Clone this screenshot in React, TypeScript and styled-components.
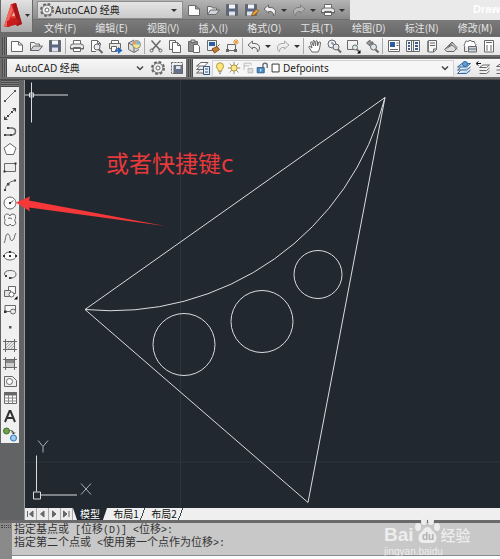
import React from "react";
import styled, { createGlobalStyle, css } from "styled-components";

const GlobalStyle = createGlobalStyle`
  *, *::before, *::after { box-sizing: border-box; }
  body { margin: 0; background: #626364; }
  body, button, select, input {
    font-family: "Noto Sans", "Noto Sans CJK SC", sans-serif;
    font-size: 10px;
  }
`;

/* ---------- icons, drawn on a 16 x 16 grid ---------- */

const icons: Record<string, React.ReactNode> = {
  new: <path d="M2.500 3.500h7l4 3.500v6.500h-11zM9.500 3.500V7h4" fill="#fdfdfd" />,
  open: (
    <>
      <path d="M2.500 12.500v-8h4l1 1.500h4v2" fill="#eee" />
      <path d="M2.500 12.500l3-4.500h9l-3.500 4.500z" fill="#cfd3da" />
    </>
  ),
  save: (
    <>
      <path d="M2.500 2.500h11v11h-11z" fill="#5b6780" />
      <path d="M5 2.500h6v4H5z" fill="#f4f6fa" stroke="none" />
      <path d="M5 9.500h6v4H5z" fill="#dfe4ec" stroke="none" />
    </>
  ),
  saveas: (
    <>
      <path d="M2.500 2.500h11v11h-11z" fill="#5b6780" />
      <path d="M5 2.500h6v4H5z" fill="#f4f6fa" stroke="none" />
      <path d="M4 9.500h6v4H4z" fill="#dfe4ec" stroke="none" />
      <path d="M8.500 14l1-3 4-4 2 2-4 4z" fill="#f0a23c" stroke="#8a5a20" />
    </>
  ),
  plot: (
    <>
      <path d="M4.500 6V2.500h7V6" fill="#fff" />
      <path d="M4 6h8q2.500 0 2.500 2.500V11h-13V8.500Q1.500 6 4 6z" fill="#e8e8e8" />
      <path d="M4.500 9.500h7v4h-7z" fill="#fff" />
      <path d="M2 10.500h12" />
    </>
  ),
  preview: (
    <>
      <path d="M8 13.500H3.500v-11h6l3 3v2M9.500 2.500v3h3" fill="#fff" />
      <circle cx="9" cy="9" r="3" fill="#e6edf4" />
      <path d="M11 11.500l3.500 3.500" strokeWidth="2" />
    </>
  ),
  publish: (
    <>
      <path d="M4.500 5V2.500h7V5" fill="#fff" />
      <path d="M2.500 5.500h11v5h-11z" fill="#e8e8e8" />
      <path d="M4.500 8.500h5v5h-5z" fill="#fff" />
      <path d="M8 11.500h3V9l4.500 3.500L11 16v-2.500H8z" fill="#2767b8" stroke="none" />
    </>
  ),
  print3d: (
    <>
      <path d="M8 2L2.500 5v6.500L8 14.500l5-3" fill="#ddd" />
      <path d="M2.500 5L8 8v6" />
      <circle cx="10.500" cy="6.500" r="4" fill="#f1ea8a" stroke="#888" />
      <path d="M10.500 6.500V3a3.500 3.500 0 0 1 3.500 3.500z" fill="#6fb5e8" stroke="none" />
      <path d="M10.500 6.500H7A3.500 3.500 0 0 1 10.500 3z" fill="#e69a6c" stroke="none" />
    </>
  ),
  cut: (
    <>
      <path d="M3.500 2.500L12 12M12.500 2.500L4 12" strokeWidth="1.500" />
      <circle cx="3.500" cy="12.500" r="1.500" />
      <circle cx="12.500" cy="12.500" r="1.500" />
    </>
  ),
  copy: (
    <>
      <path d="M2.500 11.500v-9h6v2M2.500 11.500h3" fill="#fff" />
      <path d="M5.500 4.500h5l3 3v7h-8zM10.500 4.500v3h3" fill="#fff" />
    </>
  ),
  paste: (
    <>
      <path d="M2.500 3.500h9v10h-9z" fill="#8c8c8c" />
      <path d="M5 2h4v2.500H5z" fill="#ccc" />
      <path d="M7.500 6.500h4l2 2v6h-6z" fill="#fff" />
    </>
  ),
  match: (
    <>
      <path d="M2.500 2.500h9v10h-9z" fill="#eef2f8" />
      <path d="M4 4h6v4H4z" fill="#2c5d9c" stroke="none" />
      <path d="M12.500 8.500l2-2M7 11l5-2.500 2.500 3-5 3.500z" fill="#c47a35" stroke="#85501c" />
    </>
  ),
  block: (
    <>
      <path d="M3.500 6.500h8v6h-8z" fill="#f2f2f2" />
      <path d="M2 11h3v3H2zM10 11h3v3h-3z" fill="#666" stroke="none" />
      <path d="M12 1v6M9 4h6M10 2l4 4M14 2l-4 4" stroke="#e8963a" />
    </>
  ),
  undo: <path d="M2 7l4.500-4v2.500H9q4.500.5 4.500 4.500 0 2.500-2 4 .5-3.500-2.500-4.500H6.500V11z" fill="#eee" />,
  redo: <path d="M14 7L9.500 3v2.500H7Q2.500 6 2.500 10q0 2.500 2 4-.5-3.500 2.500-4.500h2.500V11z" fill="#eee" stroke="#aaa" />,
  quickredo: <path d="M14 7L9.500 3v2.500H7Q2.500 6 2.500 10q0 2.500 2 4-.5-3.500 2.500-4.500h2.500V11z" fill="#b5b5b5" stroke="#808080" />,
  caret: <path d="M5 7h6l-3 3z" fill="#333" stroke="none" />,
  chevron: <path d="M5 6.500l3 3 3-3" strokeWidth="1.500" stroke="#444" />,
  pan: (
    <path
      d="M5 14L2 9.500q-.5-1.500 1-1L5 10 3.500 4.500q.5-1.500 1.500 0L6.500 8 6 3q1-1.500 1.500 0L8.500 8 9 3q1-1 1.500.5L10.500 8l1.500-4q1.500-.5 1.500 1L12.500 11 11 14z"
      fill="#fff"
    />
  ),
  zoomrt: (
    <>
      <circle cx="6" cy="6" r="4" fill="#eef" />
      <path d="M6 4v2h2" />
      <circle cx="10" cy="9" r="3" fill="#dde8ee" />
      <path d="M12 11.500l3 3" strokeWidth="2" />
    </>
  ),
  zoomwin: (
    <>
      <path d="M9 11.500H2.500v-9h10V7" />
      <circle cx="10" cy="9.500" r="2.500" fill="#dde8ee" />
      <path d="M12 11.500l2 2" strokeWidth="2" />
      <path d="M15.500 12v3.500H12z" fill="#000" stroke="none" />
    </>
  ),
  zoomprev: (
    <>
      <path d="M6 2L2.500 5 6 8V6h3V4H6z" fill="#999" />
      <circle cx="9.500" cy="9" r="3" fill="#dde8ee" />
      <path d="M11.500 11.500l3 3" strokeWidth="2" />
    </>
  ),
  props: (
    <>
      <path d="M2.500 2.500h11v11h-11z" fill="#fff" />
      <path d="M4 4h5v5H4z" fill="#2c5d9c" stroke="none" />
      <path d="M10.500 5h2M10.500 7.500h2M4 11.500h8" />
    </>
  ),
  center: (
    <>
      <path d="M1.500 2.500h13v11h-13z" fill="#f5f7fb" />
      <path d="M3 4h2v2H3zM3 7h2v2H3zM3 10h2v2H3zM10 4h3v2h-3zM10 7h3v2h-3zM10 10h3v2h-3z" fill="#3d5f92" stroke="none" />
      <path d="M6.500 3v10M8.500 3v10" />
    </>
  ),
  palettes: (
    <>
      <path d="M4.500 2.500h8v9l-3 2.500h-5z" fill="#f5f5f5" />
      <path d="M6 5h5M6 7.500h5M9.500 14v-3h3" />
      <path d="M3 3h1.500v11H3z" fill="#888" stroke="none" />
    </>
  ),
  sheet: (
    <>
      <path d="M1.500 11.500L9 4l5 5.500-3 4H4z" fill="#ddd" />
      <path d="M3.500 10.500L9 7l5.500 4.500M5 8.500l4.500-3" />
    </>
  ),
  markup: (
    <>
      <path d="M3 9q-2-2 0-3.500Q3 2 6 3.500q2-2.500 4 0 3-1 3 2 2 1 0 3" fill="#fff" />
      <path d="M6.500 8.500h8v5.500h-8z" fill="#c8d2e0" />
      <path d="M2.500 9v4.500h3M7 11h7" />
    </>
  ),
  calc: (
    <>
      <path d="M3.500 2.500h9v11.500h-9z" fill="#fff" />
      <path d="M5 4.500h6M5 8h2M9 8h2M5 10h2M9 10h2M5 12h2M9 12h2" />
    </>
  ),
  gear: (
    <>
      <circle cx="8" cy="8" r="6" strokeWidth="2" strokeDasharray="2.700 2" />
      <circle cx="8" cy="8" r="5" fill="#eee" />
      <circle cx="8" cy="8" r="2" fill="#fff" />
    </>
  ),
  wsave: (
    <>
      <path d="M2.500 2.500h11v11h-11z" fill="#eceff5" strokeDasharray="2 1" />
      <path d="M5 5.500h8.500v8H5z" fill="#65728c" />
      <path d="M7 6h4.500v3H7z" fill="#dfe5ee" stroke="none" />
    </>
  ),
  layers: (
    <>
      <path d="M1.500 6L6 2.500h7L9.500 6zM1.500 9.500l3-2.500M1.500 13l3-2.500M1.500 9.500H8M1.500 13H8" fill="#fff" />
      <path d="M8.500 6.500h6v8h-6z" fill="#e6edf7" stroke="#38557f" />
      <path d="M10 9h3M10 12h3" stroke="#38557f" />
    </>
  ),
  bulb: (
    <>
      <path d="M8 2a4 4 0 0 1 4 4q0 2-2 4v1.500H6V10Q4 8 4 6a4 4 0 0 1 4-4z" fill="#ffe77a" stroke="#a98d34" />
      <path d="M6.500 12.500h3M7 14.500h2" />
    </>
  ),
  sun: (
    <>
      <path d="M8 1v14M1 8h14M3 3l10 10M13 3L3 13" stroke="#8a826a" />
      <circle cx="8" cy="8" r="3.500" fill="#ffe884" stroke="#a98d34" />
    </>
  ),
  vpfreeze: (
    <g stroke="#b5b5b5">
      <path d="M3.500 10V2.500h8V5M3.500 5.500h6" />
      <path d="M8 8.500h5.500v5H8z" fill="#ddd" />
    </g>
  ),
  unlock: (
    <>
      <path d="M2.500 7.500h8v6h-8z" fill="#4a90cc" stroke="#28567f" />
      <path d="M9 7.500V5q0-2.500 2.500-2.500T14 5v3" strokeWidth="1.500" />
      <path d="M6.500 9v3" stroke="#fff" />
    </>
  ),
  swatch: <path d="M3.500 3.500h8v9h-8z" fill="#fff" stroke="#222" />,
  layercur: (
    <>
      <path d="M1.500 7L6 3.500h8.500L10.500 7zM1.500 10l3-2.500M1.500 13.500l3-3M1.500 10h9l4-3M1.500 13.500h9l4-3.500" fill="#b9d8f2" stroke="#35679c" />
      <circle cx="9" cy="4" r="2.500" fill="#5ba3df" stroke="#35679c" />
    </>
  ),
  layerprev: (
    <>
      <path d="M4.500 7.500L8 5h6.500L11.500 7.500zM4.500 10.500h7l3-2.500M4.500 13.500h7l3-2.500" fill="#fff" />
      <path d="M6 3.500H2M3.500 1.500l-2.500 2 2.500 2" stroke="#111" />
    </>
  ),
  layerstate: <path d="M2.500 6.500L7 3.500h7L10 6.500zM2.500 10h8l4-3M2.500 13.500h8l4-3.500" fill="#fff" />,
  line: (
    <>
      <path d="M3 13L13 3" />
      <path d="M2 12h2v2H2zM12 2h2v2h-2z" fill="#555" stroke="none" />
    </>
  ),
  xline: (
    <>
      <path d="M2.500 13.500l11-11" />
      <path d="M2 14v-4l4 4zM14 2v4l-4-4zM5 9h2v2H5zM9 5h2v2H9z" fill="#444" stroke="none" />
    </>
  ),
  pline: (
    <>
      <path d="M3 12h7q3.500-.5 3.500-3.500T10 5H6" strokeWidth="1.500" />
      <path d="M2 11h2v2H2zM8 11h2v2H8zM5 4h2v2H5z" fill="#444" stroke="none" />
    </>
  ),
  polygon: <path d="M8 2.500l6 4.500-2.500 6.500h-7L2 7z" fill="#fff" />,
  rect: (
    <>
      <path d="M2.500 4.500h11v8h-11z" fill="#ececec" />
      <path d="M1.500 11.500h2v2h-2zM12.500 3.500h2v2h-2z" fill="#333" stroke="none" />
    </>
  ),
  arc: (
    <>
      <path d="M3 13Q4 5 13 3.500" />
      <path d="M2 12h2v2H2zM5 6h2.500v2.500H5zM12 2.500h2v2h-2z" fill="#444" stroke="none" />
    </>
  ),
  circle: (
    <>
      <circle cx="8" cy="8" r="6" fill="#fafafa" />
      <path d="M8 8l3.500-2.500" />
      <path d="M7 7h2v2H7z" fill="#333" stroke="none" />
    </>
  ),
  cloud: (
    <path
      d="M8 4Q7 1.500 4.500 2 1.500 3 2.500 6.500 4 8 2.500 9.500 2 13 5 13.500q2.500.5 3-1.500 1 2.500 4 1.500 3-2 1-4.500-1-1 .5-2.500Q14 2 11 2 8.500 2 8 4zM6 6.500q2-1.500 4 .5"
      fill="#f6f6f6"
    />
  ),
  spline: <path d="M2 13C4 11 3 3 6 4S7 11 10 10.500 12 5 14 3" />,
  ellipse: (
    <>
      <ellipse cx="8" cy="8" rx="6" ry="4" fill="#fafafa" />
      <path d="M7 7h2v2H7zM7 3h2v2H7zM1 7h2v2H1zM13 7h2v2h-2z" fill="#333" stroke="none" />
    </>
  ),
  ellarc: (
    <>
      <path d="M2.500 9Q2 4.500 8 4.500t6 3.500q0 4-5 4" />
      <path d="M7 11h2.500v2H7zM3 9h2v2H3z" fill="#444" stroke="none" />
    </>
  ),
  insert: (
    <>
      <path d="M6.500 2.500h7v7h-7z" fill="#f8f8f8" />
      <path d="M2.500 6.500h6v6h-6z" fill="#e4e4e4" />
      <circle cx="9.500" cy="10.500" r="2.500" fill="#fff" />
      <path d="M15.500 12v3.500H12z" fill="#000" stroke="none" />
    </>
  ),
  mkblock: (
    <>
      <path d="M3 4.500h10.500v6H3z" fill="#f5f5f5" />
      <circle cx="11" cy="10.500" r="2.500" fill="#eee" />
      <path d="M2 9.500h2.500V12H2z" fill="#333" stroke="none" />
    </>
  ),
  point: <path d="M7 7h2.500v2.500H7z" fill="#555" stroke="none" />,
  hatch: (
    <>
      <path d="M3.500 4.500h9v8h-9z" fill="#e6e6e6" />
      <path d="M4 8l3-3M4 11l6-6M6 12l6-6M9 12l3-3" stroke="#aaa" />
      <path d="M1 4.500h14M1 12.500h14M3.500 2v13M12.500 2v13" />
    </>
  ),
  gradient: (
    <>
      <path d="M3.500 4.500h9v8h-9z" fill="#ccc" />
      <path d="M4 5h8v3H4z" fill="#888" stroke="none" />
      <path d="M1 4.500h14M1 12.500h14M3.500 2v13M12.500 2v13" />
    </>
  ),
  region: (
    <>
      <path d="M2.500 3.500h8l4 4v6h-12z" fill="#eee" />
      <circle cx="7.500" cy="8.500" r="3" fill="#fff" />
    </>
  ),
  table: (
    <>
      <path d="M2.500 2.500h12v11h-12z" fill="#fff" />
      <path d="M2.500 2.500h12V5h-12z" fill="#666" />
      <path d="M2.500 8h12M2.500 11h12M6.500 5v8.500M10.500 5v8.500" stroke="#888" />
    </>
  ),
  mtext: <path d="M3 14L7.500 3h1L13 14M4.500 10h7" strokeWidth="2" stroke="#333" />,
  addsel: (
    <>
      <circle cx="4.500" cy="5" r="3" fill="#6fa04c" stroke="#426b2a" />
      <circle cx="11.500" cy="12" r="3" fill="#9fcdf2" stroke="#2e74b5" />
      <path d="M8.500 4.500q3 0 3 3M10 6.500l1.500 1.500L13 6.500" stroke="#222" />
    </>
  ),
};

const Glyph = styled.svg`
  width: 16px;
  height: 16px;
  flex: none;
  fill: none;
  stroke: #686868;
  display: block;
`;

const Icon = ({ name }: { name: string }) => (
  <Glyph viewBox="0 0 16 16" aria-hidden="true">{icons[name]}</Glyph>
);

/* ---------- shared controls ---------- */

const ToolButton = styled.button<{ $narrow?: boolean }>`
  display: flex;
  align-items: center;
  justify-content: center;
  flex: none;
  width: ${(p) => (p.$narrow ? 10 : 19)}px;
  height: 18px;
  padding: 0;
  border: 0;
  background: none;
`;

const Tool = ({ name, label }: { name: string; label: string }) => (
  <ToolButton type="button" aria-label={label} title={label} $narrow={name === "caret"}>
    <Icon name={name} />
  </ToolButton>
);

const Divider = styled.span`
  flex: none;
  width: 1px;
  height: 16px;
  margin: 0 1px;
  background: #a9a9a9;
`;

const Grip = styled.span<{ $vertical?: boolean }>`
  flex: none;
  background: repeating-linear-gradient(
    ${(p) => (p.$vertical ? "0deg" : "90deg")}, #4c4c4c 0 1px, #7b7b7b 1px 2px
  );
  ${(p) =>
    p.$vertical
      ? css`height: 7px;`
      : css`width: 5px; align-self: stretch;`}
`;

const Picker = styled.label`
  display: grid;
  grid-template-columns: minmax(0, 1fr) 16px;
  align-items: center;
  flex: 1;
  min-width: 0;
  & > select {
    grid-area: 1 / 1 / 2 / 3;
    width: 100%;
    height: 18px;
    padding: 0 16px 0 6px;
    border: 0;
    appearance: none;
    background: transparent;
    color: #222;
  }
  & > svg {
    grid-area: 1 / 2;
    pointer-events: none;
  }
`;

/* ---------- header ---------- */

const Shell = styled.div`
  position: relative;
  display: flex;
  flex-direction: column;
  height: 100vh;
  min-height: 480px;
  overflow: hidden;
  background: #626364;
`;

const Header = styled.header`
  display: flex;
  flex: none;
  height: 36px;
  background: linear-gradient(#8c8c8c, #7b7b7b 55%, #686868);
`;

const AppButton = styled.button`
  display: flex;
  align-items: center;
  flex: none;
  width: 33px;
  height: 33px;
  padding: 0;
  border: 1px solid #6a6a6a;
  border-top: 0;
  background: linear-gradient(#e2e2e2, #a9a9a9);
`;

const Logo = styled.svg`
  width: 31px;
  height: 32px;
`;

const HeaderRows = styled.div`
  display: flex;
  flex-direction: column;
  flex: 1;
  min-width: 0;
`;

const TitleRow = styled.div`
  display: flex;
  height: 20px;
  background: #eaeaea;
`;

const QuickAccess = styled.div`
  display: flex;
  align-items: center;
  flex: none;
  width: 317px;
  padding-left: 4px;
  border-bottom: 1px solid #6f6f6f;
  background: linear-gradient(#b4b4b4, #8a8a8a);
`;

const WorkspaceBox = styled.div`
  display: flex;
  align-items: center;
  width: 146px;
  height: 18px;
  margin-right: 1px;
  padding-left: 1px;
  border: 1px solid #8d8d8d;
  background: linear-gradient(#e4e4e4, #cbcbcb);
  select { padding-left: 0; }
`;

const Title = styled.h1`
  flex: 1;
  min-width: 0;
  margin: 0;
  overflow: hidden;
  color: #fff;
  font: bold 11px/18px "Liberation Sans", sans-serif;
  text-align: right;
`;

const MenuBar = styled.nav`
  display: flex;
  align-items: center;
  gap: 19px;
  height: 16px;
  padding-left: 11px;
`;

const MenuItem = styled.button`
  flex: none;
  padding: 0;
  border: 0;
  background: none;
  color: #e6e6e6;
  font: 10px/16px "Noto Sans CJK SC", sans-serif;
  white-space: nowrap;
`;

/* ---------- toolbars ---------- */

const ToolbarRow = styled.div`
  display: flex;
  flex: none;
  gap: 2px;
  height: 22px;
  padding: 1px 0 2px 2px;
  border-bottom: 1px solid #4d4d4d;
  background: #6c6c6c;
`;

const Toolbar = styled.div<{ $grow?: boolean }>`
  display: flex;
  align-items: center;
  flex: ${(p) => (p.$grow ? "1 0 0" : "none")};
  min-width: 0;
  background: linear-gradient(#f7f7f7, #e6e6e6);
`;

const ClassicBox = styled.div`
  display: flex;
  width: 139px;
  margin-left: 2px;
`;

const LayerBox = styled.div`
  display: flex;
  align-items: center;
  flex: 1;
  min-width: 0;
  height: 17px;
  border: 1px solid #d2d2d2;
  background: #f6f6f6;
  & > svg { width: 14px; }
  select { padding-left: 0; }
`;

const LayerTools = styled.div`
  display: flex;
  flex: none;
  width: 46px;
  overflow: hidden;
`;

/* ---------- work area ---------- */

const Work = styled.div`
  display: flex;
  flex: 1;
  min-height: 0;
  gap: 5px;
  padding-left: 1px;
`;

const DrawBar = styled.aside`
  display: flex;
  flex-direction: column;
  flex: none;
  width: 18px;
  height: 363px;
  background: #f0f0f0;
`;

const DrawTools = styled.div`
  display: grid;
  grid-auto-rows: 1fr;
  flex: 1;
  min-height: 0;
  button { width: 18px; height: 100%; }
`;

const DrawingPane = styled.main`
  display: flex;
  flex-direction: column;
  flex: 1;
  min-width: 0;
  border-left: 1px solid #9a9a9a;
`;

const Drawing = styled.svg`
  flex: 1;
  width: 100%;
  min-height: 0;
  display: block;
  overflow: visible;
  background: #212830;
  fill: none;
  stroke: #d9dcdf;
  text {
    font-family: "Noto Sans CJK SC", sans-serif;
    font-size: 23px;
    fill: #e8393b;
    stroke: none;
  }
  tspan {
    font-family: "DejaVu Sans", sans-serif;
  }
`;

const TabStrip = styled.div`
  display: flex;
  flex: none;
  height: 12px;
  background: #efefef;
`;

const TabArrow = styled.button`
  width: 12px;
  height: 12px;
  padding: 0;
  border: 0;
  border-right: 1px solid #aaa;
  background: #ececec;
  svg { display: block; width: 10px; height: 12px; fill: #666; stroke: #666; }
`;

const Tab = styled.button<{ $active?: boolean }>`
  width: ${(p) => (p.$active ? 34 : 38)}px;
  height: 12px;
  padding: 0;
  border: 0;
  background: ${(p) => (p.$active ? "#212830" : "linear-gradient(110deg, transparent 35px, #444 35px 36px, transparent 36px)")};
  clip-path: ${(p) => (p.$active ? "polygon(0 0, 100% 0, 88% 100%, 12% 100%)" : "none")};
  color: ${(p) => (p.$active ? "#fff" : "#111")};
  font: 10px/12px "Noto Sans CJK SC", sans-serif;
`;

/* ---------- command line ---------- */

const CommandPanel = styled.section`
  display: flex;
  flex: none;
  height: 39px;
  border-top: 3px solid #6a6a6a;
  background: #8a8a8a;
`;

const CommandGrip = styled.div`
  flex: none;
  width: 12px;
  padding: 2px 1px;
  &::before {
    content: "";
    display: block;
    height: 3px;
    border: dotted #444;
    border-width: 1px 0;
  }
`;

const CommandBody = styled.div`
  flex: 1;
  min-width: 0;
  overflow: hidden;
  background: #c8c8c8;
`;

const History = styled.div`
  height: 33px;
  padding: 1px 2px;
  border-bottom: 1px solid #8b8b8b;
`;

const HistoryLine = styled.p`
  height: 13px;
  margin: 0;
  color: #333;
  font: 11px/13px "Liberation Mono", "Noto Sans CJK SC", monospace;
  white-space: pre;
`;

const Latin = styled.span`
  font-size: 10px;
`;

const CommandInput = styled.input`
  display: block;
  width: 100%;
  height: 16px;
  padding: 0 4px;
  border: 0;
  background: #fff;
`;

const Watermark = styled.div`
  position: absolute;
  right: 26px;
  bottom: 1px;
  width: 90px;
  color: rgba(255, 255, 255, 0.7);
  font: 10px/12px "Liberation Sans", sans-serif;
`;

const WatermarkTop = styled.div`
  display: flex;
  align-items: flex-end;
  gap: 1px;
  height: 30px;
  line-height: 22px;
  b { font-size: 19px; }
  strong { font: 500 15px/22px "Noto Sans CJK SC", sans-serif; }
  svg { width: 25px; height: 30px; fill: #ededed; }
  text { font: bold 10px "Liberation Sans", sans-serif; fill: #b0b0b0; }
`;

const quick: [string, string][] = [
  ["new", "新建"], ["open", "打开"], ["save", "保存"], ["saveas", "另存为"], ["undo", "放弃"],
  ["caret", "放弃列表"], ["quickredo", "重做"], ["caret", "重做列表"], ["plot", "打印"], ["caret", "自定义"],
];
const menus = ["文件(F)", "编辑(E)", "视图(V)", "插入(I)", "格式(O)", "工具(T)", "绘图(D)", "标注(N)", "修改(M)"];
const standard: [string, string][][] = [
  [["new", "新建"], ["open", "打开"], ["save", "保存"]],
  [["plot", "打印"], ["preview", "打印预览"], ["publish", "发布"], ["print3d", "三维打印"]],
  [["cut", "剪切"], ["copy", "复制"], ["paste", "粘贴"], ["match", "特性匹配"], ["block", "块编辑器"]],
  [["undo", "放弃"], ["caret", "放弃列表"], ["redo", "重做"], ["caret", "重做列表"]],
  [["pan", "平移"], ["zoomrt", "实时缩放"], ["zoomwin", "窗口缩放"], ["zoomprev", "上一个缩放"]],
  [["props", "特性"], ["center", "设计中心"], ["palettes", "工具选项板"], ["sheet", "图纸集"], ["markup", "标记集"], ["calc", "计算器"]],
];
const drawTools: [string, string][] = [
  ["line", "直线"], ["xline", "构造线"], ["pline", "多段线"], ["polygon", "多边形"], ["rect", "矩形"],
  ["arc", "圆弧"], ["circle", "圆"], ["cloud", "修订云线"], ["spline", "样条曲线"], ["ellipse", "椭圆"],
  ["ellarc", "椭圆弧"], ["insert", "插入块"], ["mkblock", "创建块"], ["point", "点"], ["hatch", "图案填充"],
  ["gradient", "渐变色"], ["region", "面域"], ["table", "表格"], ["mtext", "多行文字"], ["addsel", "添加选定对象"],
];
const arrows: [string, string][] = [
  ["第一个", "M2.500 3v6M8 3L4.500 6 8 9z"], ["上一个", "M7 3L3.500 6 7 9z"],
  ["下一个", "M3.500 3L7 6 3.500 9z"], ["最后一个", "M2.500 3L6 6 2.500 9zM8 3v6"],
];

export default function App() {
  return (
    <>
      <GlobalStyle />
      <Shell>
        <Header>
          <AppButton type="button" aria-label="应用程序菜单">
            <Logo viewBox="0 0 31 32" aria-hidden="true">
              <path d="M3 26.500L10 4l5-1 6 21-5 2-3-3-5 4z" fill="#d02322" />
              <path d="M12 4l3-1 6 21-5 2-2-9z" fill="#a3151a" />
              <path d="M3 26.500L10 4l2 6-4 10-2 6z" fill="#f0685a" />
              <path d="M9 17l3-7 3 8z" fill="#e8483f" />
              <path d="M11 16l2-4 1 4z" fill="#f6b5aa" />
              <path d="M6 21l9-3 4 4-5 3-8 2z" fill="#c81d1e" />
              <path d="M24 14h5l-2.500 3z" fill="#333" />
            </Logo>
          </AppButton>
          <HeaderRows>
            <TitleRow>
              <QuickAccess>
                <WorkspaceBox>
                  <Icon name="gear" />
                  <Picker>
                    <select aria-label="工作空间"><option>AutoCAD 经典</option></select>
                    <Icon name="caret" />
                  </Picker>
                </WorkspaceBox>
                {quick.map(([n, l], i) => <Tool key={i} name={n} label={l} />)}
              </QuickAccess>
              <Title>Draw</Title>
            </TitleRow>
            <MenuBar>
              {menus.map((m) => <MenuItem key={m} type="button">{m}</MenuItem>)}
            </MenuBar>
          </HeaderRows>
        </Header>

        <ToolbarRow>
          <Toolbar $grow>
            <Grip />
            {standard.map((group, g) => (
              <React.Fragment key={g}>
                {g > 0 && <Divider />}
                {group.map(([n, l], i) => <Tool key={i} name={n} label={l} />)}
              </React.Fragment>
            ))}
          </Toolbar>
        </ToolbarRow>
        <ToolbarRow>
          <Toolbar>
            <Grip />
            <ClassicBox>
              <Picker>
                <select aria-label="工作空间列表"><option>AutoCAD 经典</option></select>
                <Icon name="chevron" />
              </Picker>
            </ClassicBox>
            <Tool name="gear" label="工作空间设置" />
            <Tool name="wsave" label="我的工作空间" />
          </Toolbar>
          <Toolbar $grow>
            <Grip />
            <Tool name="layers" label="图层特性管理器" />
            <LayerBox>
              <Icon name="bulb" />
              <Icon name="sun" />
              <Icon name="vpfreeze" />
              <Icon name="unlock" />
              <Icon name="swatch" />
              <Picker>
                <select aria-label="图层"><option>Defpoints</option></select>
                <Icon name="chevron" />
              </Picker>
            </LayerBox>
            <LayerTools>
              <Tool name="layercur" label="置为当前图层" />
              <Tool name="layerprev" label="上一个图层" />
              <Tool name="layerstate" label="图层状态" />
            </LayerTools>
          </Toolbar>
        </ToolbarRow>

        <Work>
          <DrawBar aria-label="绘图工具栏">
            <Grip $vertical />
            <DrawTools>
              {drawTools.map(([n, l]) => <Tool key={n} name={n} label={l} />)}
            </DrawTools>
          </DrawBar>
          <DrawingPane>
            <Drawing viewBox="25 81 475 427" role="img" aria-label="图形">
              <g stroke="#2c343d">
                <path d="M180.500 81v427M25 462.500h475" />
              </g>
              <path d="M85 310L385 98 308 503z" />
              <path d="M85 310A282 282 0 0 0 385 98" />
              <circle cx="184" cy="345" r="31" />
              <circle cx="262" cy="322" r="31" />
              <circle cx="318" cy="275" r="24" />
              <path d="M25 95.500h43M31.500 83v40M29.500 93.500h4v4h-4z" />
              <path d="M36.500 456v36M40 495.500h37M33.500 492.500h7v7h-7z" />
              <path d="M38 441l5 6 5-6M43 447v6M81 484l10 11M91 484l-10 11" stroke="#a9afb5" />
              <path d="M16 203l14-6-1 4 136 25.500L29 208l1 4z" fill="#f4383a" stroke="none" />
              <text x="106" y="172">或者快捷键<tspan>c</tspan></text>
            </Drawing>
            <TabStrip>
              {arrows.map(([l, d]) => (
                <TabArrow key={l} type="button" aria-label={l}>
                  <svg viewBox="0 0 10 12" aria-hidden="true"><path d={d} /></svg>
                </TabArrow>
              ))}
              <Tab type="button" $active>模型</Tab>
              <Tab type="button">布局1</Tab>
              <Tab type="button">布局2</Tab>
            </TabStrip>
          </DrawingPane>
        </Work>

        <CommandPanel>
          <CommandGrip />
          <CommandBody>
            <History>
              <HistoryLine>
                指定基点或<Latin> [</Latin>位移<Latin>(D)] &lt;</Latin>位移<Latin>&gt;:</Latin>
              </HistoryLine>
              <HistoryLine>
                指定第二个点或<Latin> &lt;</Latin>使用第一个点作为位移<Latin>&gt;:</Latin>
              </HistoryLine>
            </History>
            <CommandInput aria-label="命令" defaultValue="命令:" />
          </CommandBody>
        </CommandPanel>

        <Watermark>
          <WatermarkTop>
            <b>Bai</b>
            <svg viewBox="0 0 25 28" preserveAspectRatio="xMidYMin" aria-hidden="true">
              <ellipse cx="3" cy="11" rx="3" ry="4" />
              <ellipse cx="9" cy="5" rx="3" ry="4" />
              <ellipse cx="16" cy="5" rx="3" ry="4" />
              <ellipse cx="22" cy="11" rx="3" ry="4" />
              <path d="M12.500 11q3 0 5 4 4 3 4 7 0 5-5 5h-8q-5 0-5-5 0-4 4-7 2-4 5-4z" />
              <text x="7" y="24">du</text>
            </svg>
            <strong>经验</strong>
          </WatermarkTop>
          jingyan.baidu
        </Watermark>
      </Shell>
    </>
  );
}
